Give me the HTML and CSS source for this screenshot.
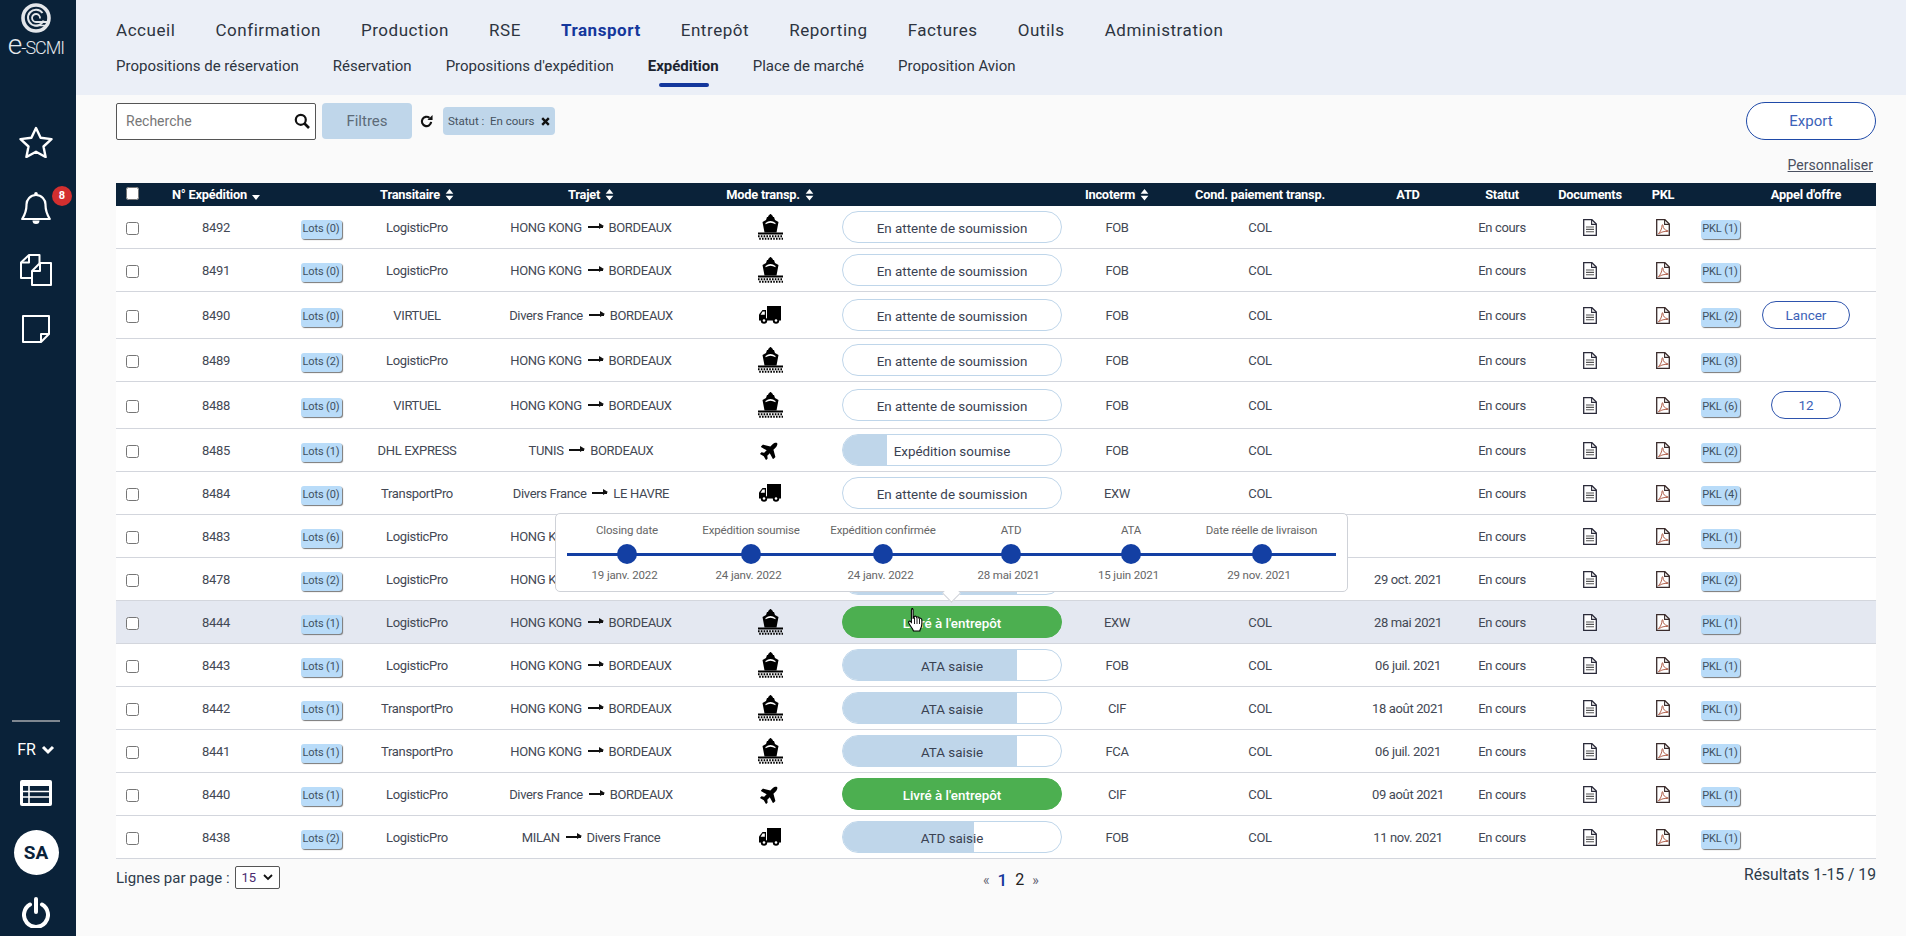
FILE: index.html
```html
<!DOCTYPE html>
<html lang="fr">
<head>
<meta charset="utf-8">
<title>e-SCMI Expédition</title>
<link rel="stylesheet" href="styles.css">
</head>
<body>
<svg class="defs" aria-hidden="true">
  <symbol id="i-ship" viewBox="0 0 25 26"><path d="M9 3h7l1 3 3.500 2-2 10.500H6.500L4.500 8 8 6z" fill="#000"/><path d="M10 3.200a2.500 2.500 0 0 1 5 0z" fill="#000"/><circle cx="12.500" cy="1" r="1" fill="#000"/><path d="M7.500 9Q12.500 4.800 17.500 9L17.500 10.200Q12.500 7.200 7.500 10.200z" fill="#fff"/><path d="M0 19.500h25" stroke="#000" stroke-width="2"/><path d="M0 22.200h25M1.200 24.800h24" stroke="#000" stroke-width="2" stroke-dasharray="1.600 1.200"/></symbol>
  <symbol id="i-truck" viewBox="0 0 22 18"><rect x="8" y="0" width="14" height="14.500" fill="#000"/><path d="M7 4H3.500L0 8.500v6h7z" fill="#000"/><path d="M3.600 5.500h2.200v3.200H1.600z" fill="#fff"/><circle cx="5" cy="14.500" r="3.200" fill="#000"/><circle cx="17" cy="14.500" r="3.200" fill="#000"/><circle cx="5" cy="14.500" r="1.300" fill="#fff"/><circle cx="17" cy="14.500" r="1.300" fill="#fff"/></symbol>
  <symbol id="i-plane" viewBox="0 0 640 640"><g transform="rotate(-45 320 320) translate(32 64)"><path d="M480 192H365.710L260.610 8.060A16.014 16.014 0 0 0 246.710 0h-65.500c-10.630 0-18.300 10.170-15.380 20.390L214.860 192H112l-43.200-57.600c-3.020-4.030-7.770-6.400-12.800-6.400H16.010C5.600 128-2.040 137.780.490 147.880L32 256 .490 364.120C-2.040 374.220 5.600 384 16.010 384H56c5.040 0 9.780-2.370 12.800-6.400L112 320h102.860l-49.030 171.600c-2.920 10.220 4.750 20.400 15.380 20.400h65.500c5.740 0 11.040-3.080 13.890-8.060L365.710 320H480c35.350 0 96-28.650 96-64s-60.650-64-96-64z" fill="#000"/></g></symbol>
  <symbol id="i-doc" viewBox="0 0 14 17"><path d="M.7.7h8.200l4.400 4.400v11.200H.7z" fill="#fff" stroke="#2b2b3a" stroke-width="1.300"/><path d="M8.600.7v4.700h4.700" fill="none" stroke="#2b2b3a" stroke-width="1.100"/><path d="M3 8h8M3 10.400h8M3 12.800h8" stroke="#555" stroke-width="1.100"/></symbol>
  <symbol id="i-pdf" viewBox="0 0 14 17"><path d="M.7.7h8.200l4.400 4.400v11.200H.7z" fill="#fff" stroke="#3a2b2b" stroke-width="1.300"/><path d="M8.600.7v4.700h4.700" fill="none" stroke="#3a2b2b" stroke-width="1.100"/><path d="M2.400 14.600C4.400 13 6 9.500 6 6.500c0-1.200 1-1 1 .2 0 2.500 2 4.800 4.600 4.900 1 .1.800 1-.2.900-3-.3-6 .4-7.800 1.900z" fill="none" stroke="#a8503a" stroke-width=".9"/></symbol>
  <symbol id="i-sort" viewBox="0 0 10 14"><path d="M5 0l4.500 5.500H.5zM.5 8h9L5 13.500z" fill="#fff"/></symbol>
</svg>

<div class="page">
  <aside class="sidebar">
    <div class="logo">
      <svg class="logo-mark" viewBox="0 0 30 30"><circle cx="15" cy="15" r="13" fill="none" stroke="#e3e6ea" stroke-width="3.600"/><path d="M22.500 17.500a8 8 0 1 1-1-7.500" fill="none" stroke="#e3e6ea" stroke-width="2"/><path d="M19 15.500a4 4 0 1 0-4 3.500h13" fill="none" stroke="#e3e6ea" stroke-width="1.800"/><path d="M13 22.500h13" stroke="#e3e6ea" stroke-width="1.500"/></svg>
      <div class="logo-text"><span class="logo-e">e</span>-SCMI</div>
    </div>
    <div class="side-icon s-star"><svg width="34" height="32" viewBox="0 0 34 32"><path d="M17 2l4.600 9.800 10.900 1.300-8 7.400 2.100 10.500-9.600-5.300-9.600 5.300 2.100-10.500-8-7.400 10.900-1.300z" fill="none" stroke="#fff" stroke-width="2.400" stroke-linejoin="round"/></svg></div>
    <div class="side-icon s-bell"><svg width="30" height="33" viewBox="0 0 30 33"><path d="M15 3a9.500 9.500 0 0 0-9.500 10c0 7-2.200 10.500-4.300 14h27.600c-2.100-3.500-4.300-7-4.300-14A9.500 9.500 0 0 0 15 3z" fill="none" stroke="#fff" stroke-width="2.200" stroke-linejoin="round"/><circle cx="15" cy="1.800" r="1.800" fill="#fff"/><path d="M11.500 28.500a3.500 3.500 0 0 0 7 0z" fill="#fff"/></svg><span class="badge">8</span></div>
    <div class="side-icon s-copy"><svg width="32" height="32" viewBox="0 0 32 32"><g fill="none" stroke="#fff" stroke-width="2" stroke-linejoin="round"><path d="M19.500 9V1H9L1 8.500V24h11"/><path d="M9 1v7.500H1"/><path d="M12 31V17l8-8h11v22z"/><path d="M20 9v8h-8"/></g></svg></div>
    <div class="side-icon s-note"><svg width="28" height="28" viewBox="0 0 28 28"><g fill="none" stroke="#fff" stroke-width="2" stroke-linejoin="round"><path d="M1 1h26v18l-8 8H1z"/><path d="M27 19h-8v8"/></g></svg></div>
    <div class="side-bottom">
      <div class="side-rule"></div>
      <div class="lang">FR<svg width="14" height="10" viewBox="0 0 14 10"><path d="M2 2l5 5 5-5" fill="none" stroke="#fff" stroke-width="3"/></svg></div>
      <svg class="side-table" width="32" height="26" viewBox="0 0 32 26"><rect width="32" height="26" rx="2" fill="#fff"/><rect x="3" y="6" width="26" height="17" fill="#0a2239"/><path d="M3 11.500h26M3 17h26" stroke="#fff" stroke-width="1.600"/><path d="M9 6v17" stroke="#fff" stroke-width="1.600"/></svg>
      <div class="avatar">SA</div>
      <svg class="power" width="28" height="31" viewBox="0 0 28 31"><path d="M8 7.500a12 12 0 1 0 12 0" fill="none" stroke="#fff" stroke-width="4" stroke-linecap="round"/><path d="M14 2v13" stroke="#fff" stroke-width="4" stroke-linecap="round"/></svg>
    </div>
  </aside>

  <div class="main">
    <header class="topbar">
      <nav class="nav-main">
        <a>Accueil</a><a>Confirmation</a><a>Production</a><a>RSE</a><a class="active">Transport</a><a>Entrepôt</a><a>Reporting</a><a>Factures</a><a>Outils</a><a>Administration</a>
      </nav>
      <nav class="nav-sub">
        <a>Propositions de réservation</a><a>Réservation</a><a>Propositions d'expédition</a><a class="active">Expédition</a><a>Place de marché</a><a>Proposition Avion</a>
      </nav>
    </header>

    <section class="content">
      <div class="toolbar">
        <div class="search"><input class="search-input" type="text" placeholder="Recherche"><svg width="16" height="16" viewBox="0 0 16 16"><circle cx="6.800" cy="6.800" r="5" fill="none" stroke="#111" stroke-width="2.200"/><path d="M10.500 10.500l4.500 4.500" stroke="#111" stroke-width="2.600"/></svg></div>
        <button class="filter-btn">Filtres</button>
        <svg class="refresh" width="13" height="14" viewBox="0 0 14 15"><path d="M12 8.500a5 5 0 1 1-1.800-4.400" fill="none" stroke="#111" stroke-width="2.300"/><path d="M8 6.500h5.500V1z" fill="#111"/></svg>
        <div class="chip">Statut :&nbsp; En cours<svg width="9" height="9" viewBox="0 0 9 9"><path d="M1.200 1.200l6.600 6.600M7.800 1.200L1.200 7.800" stroke="#111" stroke-width="2.400"/></svg></div>
        <button class="export-btn">Export</button>
      </div>
      <div class="custom-row"><a class="custom">Personnaliser</a></div>

      <table class="grid">
        <colgroup>
          <col class="c1"><col class="c2"><col class="c3"><col class="c4"><col class="c5"><col class="c6"><col class="c7"><col class="c8"><col class="c9"><col class="c10"><col class="c11"><col class="c12"><col class="c13"><col class="c14"><col class="c15">
        </colgroup>
        <thead>
          <tr>
            <th><input type="checkbox"></th>
            <th>N° Expédition <svg class="caret" width="8" height="5" viewBox="0 0 8 5"><path d="M0 0h8L4 5z" fill="#fff"/></svg></th>
            <th></th>
            <th>Transitaire <svg class="sort"><use href="#i-sort"/></svg></th>
            <th>Trajet <svg class="sort"><use href="#i-sort"/></svg></th>
            <th>Mode transp. <svg class="sort"><use href="#i-sort"/></svg></th>
            <th></th>
            <th>Incoterm <svg class="sort"><use href="#i-sort"/></svg></th>
            <th>Cond. paiement transp.</th>
            <th>ATD</th>
            <th>Statut</th>
            <th>Documents</th>
            <th>PKL</th>
            <th></th>
            <th class="offer">Appel d'offre</th>
          </tr>
        </thead>
        <tbody>
          <tr><td><input type="checkbox"></td><td>8492</td><td><span class="tag lots">Lots (0)</span></td><td>LogisticPro</td><td>HONG KONG <span class="arrow"></span> BORDEAUX</td><td><svg class="ic ship"><use href="#i-ship"/></svg></td><td><div class="pill"><span>En attente de soumission</span></div></td><td>FOB</td><td>COL</td><td></td><td>En cours</td><td><svg class="ic file"><use href="#i-doc"/></svg></td><td><svg class="ic file"><use href="#i-pdf"/></svg></td><td><span class="tag pkl">PKL (1)</span></td><td class="offer"></td></tr>
          <tr><td><input type="checkbox"></td><td>8491</td><td><span class="tag lots">Lots (0)</span></td><td>LogisticPro</td><td>HONG KONG <span class="arrow"></span> BORDEAUX</td><td><svg class="ic ship"><use href="#i-ship"/></svg></td><td><div class="pill"><span>En attente de soumission</span></div></td><td>FOB</td><td>COL</td><td></td><td>En cours</td><td><svg class="ic file"><use href="#i-doc"/></svg></td><td><svg class="ic file"><use href="#i-pdf"/></svg></td><td><span class="tag pkl">PKL (1)</span></td><td class="offer"></td></tr>
          <tr class="tall"><td><input type="checkbox"></td><td>8490</td><td><span class="tag lots">Lots (0)</span></td><td>VIRTUEL</td><td>Divers France <span class="arrow"></span> BORDEAUX</td><td><svg class="ic truck"><use href="#i-truck"/></svg></td><td><div class="pill"><span>En attente de soumission</span></div></td><td>FOB</td><td>COL</td><td></td><td>En cours</td><td><svg class="ic file"><use href="#i-doc"/></svg></td><td><svg class="ic file"><use href="#i-pdf"/></svg></td><td><span class="tag pkl">PKL (2)</span></td><td class="offer"><button class="offer-btn wide">Lancer</button></td></tr>
          <tr><td><input type="checkbox"></td><td>8489</td><td><span class="tag lots">Lots (2)</span></td><td>LogisticPro</td><td>HONG KONG <span class="arrow"></span> BORDEAUX</td><td><svg class="ic ship"><use href="#i-ship"/></svg></td><td><div class="pill"><span>En attente de soumission</span></div></td><td>FOB</td><td>COL</td><td></td><td>En cours</td><td><svg class="ic file"><use href="#i-doc"/></svg></td><td><svg class="ic file"><use href="#i-pdf"/></svg></td><td><span class="tag pkl">PKL (3)</span></td><td class="offer"></td></tr>
          <tr class="tall"><td><input type="checkbox"></td><td>8488</td><td><span class="tag lots">Lots (0)</span></td><td>VIRTUEL</td><td>HONG KONG <span class="arrow"></span> BORDEAUX</td><td><svg class="ic ship"><use href="#i-ship"/></svg></td><td><div class="pill"><span>En attente de soumission</span></div></td><td>FOB</td><td>COL</td><td></td><td>En cours</td><td><svg class="ic file"><use href="#i-doc"/></svg></td><td><svg class="ic file"><use href="#i-pdf"/></svg></td><td><span class="tag pkl">PKL (6)</span></td><td class="offer"><button class="offer-btn">12</button></td></tr>
          <tr><td><input type="checkbox"></td><td>8485</td><td><span class="tag lots">Lots (1)</span></td><td>DHL EXPRESS</td><td>TUNIS <span class="arrow"></span> BORDEAUX</td><td><svg class="ic plane"><use href="#i-plane"/></svg></td><td><div class="pill"><i class="fill" style="width:20%"></i><span>Expédition soumise</span></div></td><td>FOB</td><td>COL</td><td></td><td>En cours</td><td><svg class="ic file"><use href="#i-doc"/></svg></td><td><svg class="ic file"><use href="#i-pdf"/></svg></td><td><span class="tag pkl">PKL (2)</span></td><td class="offer"></td></tr>
          <tr><td><input type="checkbox"></td><td>8484</td><td><span class="tag lots">Lots (0)</span></td><td>TransportPro</td><td>Divers France <span class="arrow"></span> LE HAVRE</td><td><svg class="ic truck"><use href="#i-truck"/></svg></td><td><div class="pill"><span>En attente de soumission</span></div></td><td>EXW</td><td>COL</td><td></td><td>En cours</td><td><svg class="ic file"><use href="#i-doc"/></svg></td><td><svg class="ic file"><use href="#i-pdf"/></svg></td><td><span class="tag pkl">PKL (4)</span></td><td class="offer"></td></tr>
          <tr><td><input type="checkbox"></td><td>8483</td><td><span class="tag lots">Lots (6)</span></td><td>LogisticPro</td><td>HONG KONG <span class="arrow"></span> BORDEAUX</td><td><svg class="ic ship"><use href="#i-ship"/></svg></td><td><div class="pill"><span>En attente de soumission</span></div></td><td>FOB</td><td>COL</td><td></td><td>En cours</td><td><svg class="ic file"><use href="#i-doc"/></svg></td><td><svg class="ic file"><use href="#i-pdf"/></svg></td><td><span class="tag pkl">PKL (1)</span></td><td class="offer"></td></tr>
          <tr><td><input type="checkbox"></td><td>8478</td><td><span class="tag lots">Lots (2)</span></td><td>LogisticPro</td><td>HONG KONG <span class="arrow"></span> BORDEAUX</td><td><svg class="ic ship"><use href="#i-ship"/></svg></td><td><div class="pill"><i class="fill" style="width:80%"></i><span>ATA saisie</span></div></td><td>FOB</td><td>COL</td><td>29 oct. 2021</td><td>En cours</td><td><svg class="ic file"><use href="#i-doc"/></svg></td><td><svg class="ic file"><use href="#i-pdf"/></svg></td><td><span class="tag pkl">PKL (2)</span></td><td class="offer"></td></tr>
          <tr class="hover"><td><input type="checkbox"></td><td>8444</td><td><span class="tag lots">Lots (1)</span></td><td>LogisticPro</td><td>HONG KONG <span class="arrow"></span> BORDEAUX</td><td><svg class="ic ship"><use href="#i-ship"/></svg></td><td><div class="pill done"><span>Livré à l'entrepôt</span></div></td><td>EXW</td><td>COL</td><td>28 mai 2021</td><td>En cours</td><td><svg class="ic file"><use href="#i-doc"/></svg></td><td><svg class="ic file"><use href="#i-pdf"/></svg></td><td><span class="tag pkl">PKL (1)</span></td><td class="offer"></td></tr>
          <tr><td><input type="checkbox"></td><td>8443</td><td><span class="tag lots">Lots (1)</span></td><td>LogisticPro</td><td>HONG KONG <span class="arrow"></span> BORDEAUX</td><td><svg class="ic ship"><use href="#i-ship"/></svg></td><td><div class="pill"><i class="fill" style="width:80%"></i><span>ATA saisie</span></div></td><td>FOB</td><td>COL</td><td>06 juil. 2021</td><td>En cours</td><td><svg class="ic file"><use href="#i-doc"/></svg></td><td><svg class="ic file"><use href="#i-pdf"/></svg></td><td><span class="tag pkl">PKL (1)</span></td><td class="offer"></td></tr>
          <tr><td><input type="checkbox"></td><td>8442</td><td><span class="tag lots">Lots (1)</span></td><td>TransportPro</td><td>HONG KONG <span class="arrow"></span> BORDEAUX</td><td><svg class="ic ship"><use href="#i-ship"/></svg></td><td><div class="pill"><i class="fill" style="width:80%"></i><span>ATA saisie</span></div></td><td>CIF</td><td>COL</td><td>18 août 2021</td><td>En cours</td><td><svg class="ic file"><use href="#i-doc"/></svg></td><td><svg class="ic file"><use href="#i-pdf"/></svg></td><td><span class="tag pkl">PKL (1)</span></td><td class="offer"></td></tr>
          <tr><td><input type="checkbox"></td><td>8441</td><td><span class="tag lots">Lots (1)</span></td><td>TransportPro</td><td>HONG KONG <span class="arrow"></span> BORDEAUX</td><td><svg class="ic ship"><use href="#i-ship"/></svg></td><td><div class="pill"><i class="fill" style="width:80%"></i><span>ATA saisie</span></div></td><td>FCA</td><td>COL</td><td>06 juil. 2021</td><td>En cours</td><td><svg class="ic file"><use href="#i-doc"/></svg></td><td><svg class="ic file"><use href="#i-pdf"/></svg></td><td><span class="tag pkl">PKL (1)</span></td><td class="offer"></td></tr>
          <tr><td><input type="checkbox"></td><td>8440</td><td><span class="tag lots">Lots (1)</span></td><td>LogisticPro</td><td>Divers France <span class="arrow"></span> BORDEAUX</td><td><svg class="ic plane"><use href="#i-plane"/></svg></td><td><div class="pill done"><span>Livré à l'entrepôt</span></div></td><td>CIF</td><td>COL</td><td>09 août 2021</td><td>En cours</td><td><svg class="ic file"><use href="#i-doc"/></svg></td><td><svg class="ic file"><use href="#i-pdf"/></svg></td><td><span class="tag pkl">PKL (1)</span></td><td class="offer"></td></tr>
          <tr><td><input type="checkbox"></td><td>8438</td><td><span class="tag lots">Lots (2)</span></td><td>LogisticPro</td><td>MILAN <span class="arrow"></span> Divers France</td><td><svg class="ic truck"><use href="#i-truck"/></svg></td><td><div class="pill"><i class="fill" style="width:60%"></i><span>ATD saisie</span></div></td><td>FOB</td><td>COL</td><td>11 nov. 2021</td><td>En cours</td><td><svg class="ic file"><use href="#i-doc"/></svg></td><td><svg class="ic file"><use href="#i-pdf"/></svg></td><td><span class="tag pkl">PKL (1)</span></td><td class="offer"></td></tr>
        </tbody>
      </table>

      <footer class="foot">
        <div class="per-page">Lignes par page :<div class="select">15<svg width="10" height="7" viewBox="0 0 10 7"><path d="M1 1l4 4 4-4" fill="none" stroke="#111" stroke-width="1.800"/></svg></div></div>
        <div class="pages"><span class="pg-arrow">«</span><b>1</b><span>2</span><span class="pg-arrow">»</span></div>
        <div class="results">Résultats 1-15 / 19</div>
      </footer>
    </section>
  </div>

  <div class="tooltip">
    <div class="tl">
      <div class="tl-step"><span class="tl-label">Closing date</span><i class="tl-dot"></i><span class="tl-date">19 janv. 2022</span></div>
      <div class="tl-step"><span class="tl-label">Expédition soumise</span><i class="tl-dot"></i><span class="tl-date">24 janv. 2022</span></div>
      <div class="tl-step"><span class="tl-label">Expédition confirmée</span><i class="tl-dot"></i><span class="tl-date">24 janv. 2022</span></div>
      <div class="tl-step"><span class="tl-label">ATD</span><i class="tl-dot"></i><span class="tl-date">28 mai 2021</span></div>
      <div class="tl-step"><span class="tl-label">ATA</span><i class="tl-dot"></i><span class="tl-date">15 juin 2021</span></div>
      <div class="tl-step"><span class="tl-label">Date réelle de livraison</span><i class="tl-dot"></i><span class="tl-date">29 nov. 2021</span></div>
    </div>
  </div>
  <svg class="cursor" width="18" height="25" viewBox="0 0 18 25"><path d="M4.500 1.500c1 0 1.600.7 1.600 1.700v8l1-.3V9.500c1.200-.8 2.300-.4 2.500.8 1.200-.7 2.300-.3 2.500 1 1.300-.5 2.600.2 2.700 1.500.2 3 .3 6-1 8.500-.6 1.200-1 2.200-1 2.700H6.500c-.5-1.500-1.500-3-2.600-4.500-1-1.300-2-2.800-2.300-4-.2-1 1-1.800 2-1l.8.8V3.200c0-1 .6-1.700 1.600-1.700z" fill="#fff" stroke="#000" stroke-width="1.100"/><path d="M7.500 11v6M10 11v6M12.500 12v5" stroke="#000" stroke-width=".9"/></svg>
</div>
</body>
</html>
```

FILE: styles.css
```css
* { box-sizing: border-box; }
html, body { margin: 0; padding: 0; height: 100%; }
body { font-family: Roboto, "Noto Sans", sans-serif; color: #434854; background: #fafafa; overflow: hidden; }
.defs { position: absolute; width: 0; height: 0; }
.page { position: relative; display: flex; width: 1906px; height: 936px; overflow: hidden; }

.sidebar { width: 76px; flex: none; background: #0a2239; display: flex; flex-direction: column; align-items: center; color: #fff; padding-right: 4px; }
.logo { height: 64px; display: flex; flex-direction: column; align-items: center; padding-top: 3px; }
.logo-mark { width: 30px; height: 30px; }
.logo-text { font-size: 18px; line-height: 20px; letter-spacing: -1px; color: #e6e9ed; white-space: nowrap; font-weight: 300; margin-top: 2px; }
.logo-e { font-size: 28px; line-height: 20px; }
.side-icon { position: relative; display: flex; align-items: center; justify-content: center; width: 72px; }
.s-star { height: 66px; margin-top: 45px; }
.s-bell { height: 66px; }
.s-copy { height: 58px; }
.s-note { height: 60px; }
.badge { position: absolute; left: 52px; top: 11px; width: 20px; height: 20px; border-radius: 50%; background: #d32f2f; color: #fff; font-size: 11px; font-weight: 700; line-height: 20px; text-align: center; }
.side-bottom { margin-top: auto; display: flex; flex-direction: column; align-items: center; width: 72px; }
.side-rule { width: 48px; height: 2px; background: #7f8790; }
.lang { margin-top: 18px; display: flex; align-items: center; gap: 5px; font-size: 16px; line-height: 20px; }
.side-table { margin-top: 20px; }
.avatar { margin-top: 24px; width: 45px; height: 45px; border-radius: 50%; background: #fff; color: #0a2239; font-size: 19px; font-weight: 700; line-height: 45px; text-align: center; }
.power { margin-top: 22px; margin-bottom: 8px; }

.main { flex: 1; min-width: 0; display: flex; flex-direction: column; }
.topbar { height: 95px; flex: none; background: #ebeff7; padding: 18px 0 0 40px; }
.nav-main { display: flex; height: 24px; align-items: center; font-size: 17px; color: #2d3440; letter-spacing: .55px; white-space: nowrap; }
.nav-main a { margin-right: 40px; }
.nav-main .active { color: #14379c; font-weight: 700; }
.nav-sub { display: flex; margin-top: 12px; height: 24px; align-items: center; font-size: 15px; color: #2d3440; white-space: nowrap; }
.nav-sub a { margin-right: 34px; position: relative; }
.nav-sub .active { font-weight: 700; color: #1d2430; }
.nav-sub .active::after { content: ""; position: absolute; left: 11px; right: 10px; top: 26px; height: 4px; border-radius: 2px; background: #14379c; }

.content { flex: 1; padding: 7px 30px 0 40px; }
.toolbar { display: flex; align-items: center; height: 38px; }
.search { width: 200px; height: 37px; background: #fff; border: 1px solid #555; border-radius: 2px; display: flex; align-items: center; padding: 0 5px 0 9px; }
.search-input { flex: 1; min-width: 0; border: 0; outline: 0; padding: 0; font: 14px Roboto, sans-serif; background: transparent; }
.search-input::placeholder { color: #777; opacity: 1; }
.filter-btn { width: 90px; height: 36px; margin-left: 6px; border: 0; border-radius: 4px; background: #bfd6ea; color: #5d6b78; font: 15px Roboto, sans-serif; }
.refresh { margin-left: 8px; }
.chip { margin-left: 10px; width: 112px; height: 28px; border-radius: 4px; background: #bfd6ea; color: #45525e; font-size: 11.500px; display: flex; align-items: center; gap: 6px; padding-left: 5px; white-space: nowrap; }
.export-btn { margin-left: auto; width: 130px; height: 38px; border: 1.500px solid #1f4aa8; border-radius: 19px; background: #fff; color: #3c62b8; font: 15px Roboto, sans-serif; }
.custom-row { height: 43px; padding: 16px 3px 0 0; text-align: right; font-size: 14px; line-height: 18px; }
.custom { color: #4a5060; text-decoration: underline; }

.grid { width: 1760px; table-layout: fixed; border-collapse: separate; border-spacing: 0; background: #fff; font-size: 13px; }
.c1 { width: 32px; } .c2 { width: 136px; } .c3 { width: 74px; } .c4 { width: 118px; } .c5 { width: 230px; }
.c6 { width: 128px; } .c7 { width: 236px; } .c8 { width: 94px; } .c9 { width: 192px; } .c10 { width: 104px; }
.c11 { width: 84px; } .c12 { width: 92px; } .c13 { width: 54px; } .c14 { width: 64px; } .c15 { width: 122px; }
.grid th { height: 23px; padding: 0; background: #0a2239; color: #fff; font-size: 12.800px; font-weight: 700; letter-spacing: -.2px; text-align: center; white-space: nowrap; }
.grid th input { margin: 0; display: block; margin-left: 10px; margin-top: -3px; }
.sort { width: 9px; height: 12px; vertical-align: -2px; margin-left: 2px; }
.caret { margin-left: 2px; vertical-align: -1px; }
.grid td { height: 43px; padding: 0; text-align: center; border-bottom: 1px solid #d3d6dd; letter-spacing: -.35px; white-space: nowrap; overflow: hidden; }
.grid .tall td { height: 47px; }
.grid .hover td { background: #e4e8f1; }
.grid td input { margin: 2px 0 0 10px; display: block; }
.grid .offer { padding-right: 18px; }
.arrow { display: inline-block; width: 15px; height: 2px; background: #111; position: relative; vertical-align: 4px; margin: 0 3px; }
.arrow::after { content: ""; position: absolute; right: -1px; top: -2.500px; border-left: 5px solid #111; border-top: 3.500px solid transparent; border-bottom: 3.500px solid transparent; }
.tag { display: inline-block; height: 19px; line-height: 18px; border-radius: 3px; background: #b9dcf9; color: #3f5060; font-size: 11px; letter-spacing: -.1px; box-shadow: 1px 1px 1px #777; text-align: center; vertical-align: middle; margin-top: 4px; }
.lots { width: 41px; }
.pkl { width: 39px; margin-left: -4px; }
.ic { display: inline-block; vertical-align: middle; }
.ship { width: 25px; height: 26px; }
.truck { width: 22px; height: 18px; }
.plane { width: 22px; height: 22px; }
.file { width: 14px; height: 17px; }
.pill { position: relative; width: 220px; height: 32px; margin: 0 auto; border: 1px solid #bfd6ea; border-radius: 16px; background: #fff; overflow: hidden; font-size: 13.400px; line-height: 32px; color: #3a4252; letter-spacing: 0; }
.pill span { position: relative; top: 1px; }
.fill { position: absolute; left: 0; top: 0; bottom: 0; background: #bfd6ea; }
.pill.done { background: #4caf50; border-color: #4caf50; color: #fff; font-weight: 500; }
.offer-btn { height: 28px; width: 70px; border: 1.500px solid #2e54ad; border-radius: 14px; background: #fff; color: #3c62b8; font: 13.500px Roboto, sans-serif; display: block; margin: 0 auto; padding: 0; }
.offer-btn.wide { width: 88px; }

.foot { display: grid; grid-template-columns: 866px auto 1fr; align-items: start; font-size: 15px; color: #2d3a4a; }
.per-page { display: flex; align-items: center; gap: 5px; padding-top: 7px; white-space: nowrap; }
.select { width: 45px; height: 23px; border: 1px solid #555; border-radius: 2px; background: #fff; display: flex; align-items: center; justify-content: space-between; padding: 0 6px; font-size: 13px; color: #4a2a70; }
.pages { display: flex; gap: 8px; align-items: center; padding-top: 12px; font-size: 16px; line-height: 18px; color: #222; margin-left: 1px; }
.pages b { color: #14379c; font-weight: 500; font-size: 17px; }
.pg-arrow { color: #667; font-size: 14px; }
.results { text-align: right; padding-top: 6px; white-space: nowrap; font-size: 15.700px; }

.tooltip { position: absolute; left: 555px; top: 513px; width: 793px; height: 79px; background: #fff; border: 1px solid #cfd2d8; border-radius: 5px; padding-left: 11px; }
.tooltip::after { content: ""; position: absolute; left: 389px; top: 73px; width: 12px; height: 12px; background: #fff; border-right: 1px solid #cfd2d8; border-bottom: 1px solid #cfd2d8; transform: rotate(45deg); }
.tl { display: grid; grid-template-columns: 120px 128px 136px 120px 120px 141px; position: relative; height: 77px; }
.tl::before { content: ""; position: absolute; left: 0; width: 769px; top: 39px; height: 3px; background: #133fa3; }
.tl-step { position: relative; display: flex; flex-direction: column; align-items: center; font-size: 11.500px; color: #666; white-space: nowrap; letter-spacing: -.15px; }
.tl-label { height: 17px; line-height: 17px; margin-top: 8px; }
.tl-dot { width: 20px; height: 20px; border-radius: 50%; background: #133fa3; margin-top: 5px; flex: none; }
.tl-date { line-height: 16px; margin-top: 3px; margin-left: -5px; }
.cursor { position: absolute; left: 907px; top: 607px; }
```
